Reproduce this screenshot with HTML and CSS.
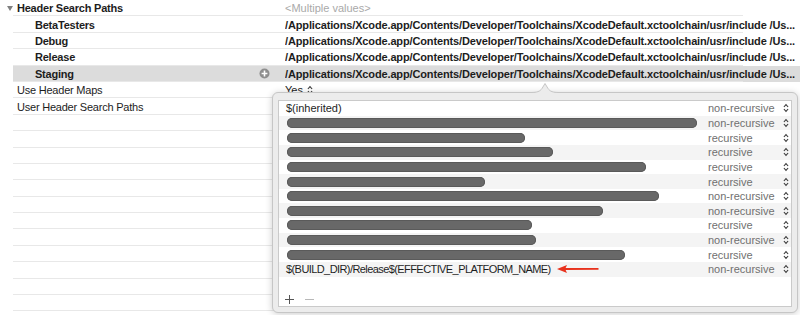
FILE: index.html
```html
<!DOCTYPE html>
<html>
<head>
<meta charset="utf-8">
<title>Header Search Paths</title>
<link rel="stylesheet" href="styles.css">
</head>
<body>
<div class="settings">
  <div class="row group">
    <div class="label"><svg class="disclosure" width="6" height="5" viewBox="0 0 6 5"><polygon points="0,0 6,0 3,5"/></svg><span>Header Search Paths</span></div>
    <div class="value muted">&lt;Multiple values&gt;</div>
  </div>
  <div class="row">
    <div class="label sub">BetaTesters</div>
    <div class="value strong">/Applications/Xcode.app/Contents/Developer/Toolchains/XcodeDefault.xctoolchain/usr/include /Us...</div>
  </div>
  <div class="row">
    <div class="label sub">Debug</div>
    <div class="value strong">/Applications/Xcode.app/Contents/Developer/Toolchains/XcodeDefault.xctoolchain/usr/include /Us...</div>
  </div>
  <div class="row">
    <div class="label sub">Release</div>
    <div class="value strong">/Applications/Xcode.app/Contents/Developer/Toolchains/XcodeDefault.xctoolchain/usr/include /Us...</div>
  </div>
  <div class="row selected">
    <div class="label sub">Staging<svg class="add-circle" width="11" height="11" viewBox="0 0 11 11"><circle cx="5.5" cy="5.5" r="5" fill="#8e8e8e"/><path d="M5.5 2.6V8.4M2.6 5.5H8.4" stroke="#fff" stroke-width="1.6"/></svg></div>
    <div class="value strong">/Applications/Xcode.app/Contents/Developer/Toolchains/XcodeDefault.xctoolchain/usr/include /Us...</div>
  </div>
  <div class="row">
    <div class="label">Use Header Maps</div>
    <div class="value">Yes<svg class="stepper" width="6" height="10" viewBox="0 0 6 10"><path d="M0.9 4L3 1.6L5.1 4M0.9 6L3 8.4L5.1 6"/></svg></div>
  </div>
  <div class="row">
    <div class="label">User Header Search Paths</div>
    <div class="value"></div>
  </div>
  <div class="row"></div>
  <div class="row"></div>
  <div class="row"></div>
  <div class="row"></div>
  <div class="row"></div>
  <div class="row"></div>
  <div class="row"></div>
  <div class="row"></div>
  <div class="row"></div>
  <div class="row"></div>
  <div class="row"></div>
  <div class="row"></div>
  <div class="row"></div>
</div>

<div class="popover">
  <svg class="popover-arrow" width="28" height="12" viewBox="0 0 28 12">
    <path d="M0 10.5C6 10.5 9 9.5 11 6.5L14 1.5L17 6.5C19 9.5 22 10.5 28 10.5V12H0Z" fill="#ececec"/>
    <path d="M0 10.5C6 10.5 9 9.5 11 6.5L14 1.5L17 6.5C19 9.5 22 10.5 28 10.5" fill="none" stroke="#c6c6c6" stroke-width="1"/>
  </svg>
  <div class="list">
    <div class="items">
      <div class="item"><div class="path">$(inherited)</div><div class="mode">non-recursive<svg class="stepper" width="6" height="10" viewBox="0 0 6 10"><path d="M0.9 4L3 1.6L5.1 4M0.9 6L3 8.4L5.1 6"/></svg></div></div>
      <div class="item"><div class="path"><span class="redacted" style="width:410px"></span></div><div class="mode">non-recursive<svg class="stepper" width="6" height="10" viewBox="0 0 6 10"><path d="M0.9 4L3 1.6L5.1 4M0.9 6L3 8.4L5.1 6"/></svg></div></div>
      <div class="item"><div class="path"><span class="redacted" style="width:238px"></span></div><div class="mode">recursive<svg class="stepper" width="6" height="10" viewBox="0 0 6 10"><path d="M0.9 4L3 1.6L5.1 4M0.9 6L3 8.4L5.1 6"/></svg></div></div>
      <div class="item"><div class="path"><span class="redacted" style="width:266px"></span></div><div class="mode">recursive<svg class="stepper" width="6" height="10" viewBox="0 0 6 10"><path d="M0.9 4L3 1.6L5.1 4M0.9 6L3 8.4L5.1 6"/></svg></div></div>
      <div class="item"><div class="path"><span class="redacted" style="width:359px"></span></div><div class="mode">recursive<svg class="stepper" width="6" height="10" viewBox="0 0 6 10"><path d="M0.9 4L3 1.6L5.1 4M0.9 6L3 8.4L5.1 6"/></svg></div></div>
      <div class="item"><div class="path"><span class="redacted" style="width:198px"></span></div><div class="mode">recursive<svg class="stepper" width="6" height="10" viewBox="0 0 6 10"><path d="M0.9 4L3 1.6L5.1 4M0.9 6L3 8.4L5.1 6"/></svg></div></div>
      <div class="item"><div class="path"><span class="redacted" style="width:372px"></span></div><div class="mode">non-recursive<svg class="stepper" width="6" height="10" viewBox="0 0 6 10"><path d="M0.9 4L3 1.6L5.1 4M0.9 6L3 8.4L5.1 6"/></svg></div></div>
      <div class="item"><div class="path"><span class="redacted" style="width:316px"></span></div><div class="mode">non-recursive<svg class="stepper" width="6" height="10" viewBox="0 0 6 10"><path d="M0.9 4L3 1.6L5.1 4M0.9 6L3 8.4L5.1 6"/></svg></div></div>
      <div class="item"><div class="path"><span class="redacted" style="width:245px"></span></div><div class="mode">recursive<svg class="stepper" width="6" height="10" viewBox="0 0 6 10"><path d="M0.9 4L3 1.6L5.1 4M0.9 6L3 8.4L5.1 6"/></svg></div></div>
      <div class="item"><div class="path"><span class="redacted" style="width:249px"></span></div><div class="mode">non-recursive<svg class="stepper" width="6" height="10" viewBox="0 0 6 10"><path d="M0.9 4L3 1.6L5.1 4M0.9 6L3 8.4L5.1 6"/></svg></div></div>
      <div class="item"><div class="path"><span class="redacted" style="width:338px"></span></div><div class="mode">recursive<svg class="stepper" width="6" height="10" viewBox="0 0 6 10"><path d="M0.9 4L3 1.6L5.1 4M0.9 6L3 8.4L5.1 6"/></svg></div></div>
      <div class="item"><div class="path"><span class="caps">$(BUILD_DIR)/Release$(EFFECTIVE_PLATFORM_NAME)</span><svg class="red-arrow" width="42" height="10" viewBox="0 0 42 10"><path d="M0 5L10 0.9L8.6 4.1L41.5 3.9L41.5 5.7L8.6 5.9L10 9.1Z" fill="#e8321d"/></svg></div><div class="mode">non-recursive<svg class="stepper" width="6" height="10" viewBox="0 0 6 10"><path d="M0.9 4L3 1.6L5.1 4M0.9 6L3 8.4L5.1 6"/></svg></div></div>
    </div>
    <div class="list-footer">
      <svg class="btn-add" width="9" height="9" viewBox="0 0 9 9"><path d="M4.5 0V9M0 4.5H9"/></svg>
      <svg class="btn-remove" width="9" height="9" viewBox="0 0 9 9"><path d="M0 4.5H9"/></svg>
    </div>
  </div>
</div>
</body>
</html>
```

FILE: styles.css
```css
* {
  box-sizing: border-box;
}

html,
body {
  margin: 0;
  padding: 0;
}

body {
  width: 800px;
  height: 315px;
  overflow: hidden;
  position: relative;
  background: #ffffff;
  font-family: "Liberation Sans", Arial, sans-serif;
  font-size: 11px;
  color: #1d1d1d;
}

.settings {
  display: flex;
  flex-direction: column;
}

.row {
  display: flex;
  align-items: center;
  flex: none;
  height: 16.4px;
  margin-left: 13px;
  background: linear-gradient(#e8e8e8, #e8e8e8) no-repeat left bottom / 730px 1px;
}

.row.selected {
  background-color: #dcdcdc;
}

.label {
  width: 272px;
  flex: none;
  display: flex;
  align-items: center;
  padding-left: 4px;
  white-space: nowrap;
  letter-spacing: -0.22px;
}

.label.sub {
  padding-left: 22px;
  font-weight: bold;
}

.group .label {
  font-weight: bold;
}

.disclosure {
  margin-left: -10px;
  margin-right: 4px;
  fill: #808080;
}

.add-circle {
  margin-left: auto;
  margin-right: 15px;
}

.value {
  flex: 1;
  min-width: 0;
  display: flex;
  align-items: center;
  overflow: hidden;
  white-space: nowrap;
}

.value.strong {
  font-weight: bold;
  letter-spacing: -0.14px;
}

.value.muted {
  color: #a9a9a9;
}

.stepper {
  flex: none;
  fill: none;
  stroke: #3a3a3a;
  stroke-width: 1.1;
}

.value .stepper {
  margin-left: 4px;
}

/* popover */
.popover {
  position: absolute;
  left: 272px;
  top: 92px;
  width: 526px;
  height: 221px;
  display: flex;
  padding: 7px 5px 5px;
  background: #ececec;
  border: 1px solid #c6c6c6;
  border-radius: 6px;
  box-shadow: 0 1px 7px rgba(0, 0, 0, 0.2);
}

.popover-arrow {
  position: absolute;
  left: 258px;
  top: -11px;
}

.list {
  flex: 1;
  display: flex;
  flex-direction: column;
  background: #ffffff;
  border: 1px solid #cacaca;
}

.items {
  display: flex;
  flex-direction: column;
}

.item {
  display: flex;
  align-items: center;
  height: 14.65px;
  flex: none;
}

.item:nth-child(even) {
  background: #f4f4f4;
}

.path {
  flex: 1;
  min-width: 0;
  display: flex;
  align-items: center;
  padding-left: 7px;
  white-space: nowrap;
  color: #1e1e1e;
}

.caps {
  letter-spacing: -0.58px;
}

.redacted {
  display: block;
  height: 10px;
  margin-left: 1px;
  border-radius: 5px;
  background: #686868;
  box-shadow: inset 0 0 0 1px #5a5a5a;
}

.red-arrow {
  margin-left: 6px;
  flex: none;
}

.mode {
  width: 83px;
  flex: none;
  display: flex;
  align-items: center;
  justify-content: space-between;
  padding-right: 2px;
  color: #707070;
}

.list-footer {
  margin-top: auto;
  height: 14px;
  display: flex;
  align-items: center;
  gap: 11px;
  padding-left: 6px;
}

.btn-add {
  stroke: #555555;
  stroke-width: 1;
  fill: none;
}

.btn-remove {
  stroke: #b8b8b8;
  stroke-width: 1;
  fill: none;
}
```
